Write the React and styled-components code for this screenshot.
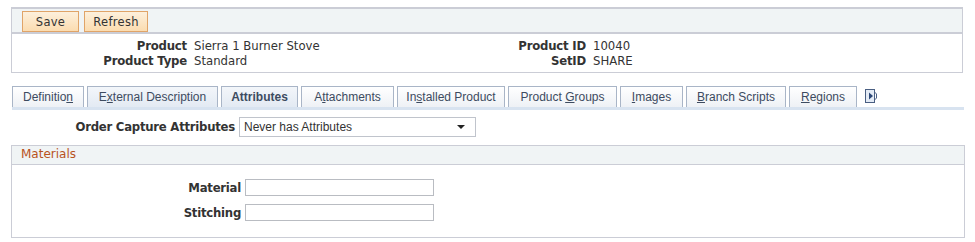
import React, { useState } from 'react';
import styled, { createGlobalStyle } from 'styled-components';

const GlobalStyle = createGlobalStyle`
  body {
    margin: 0;
    background: #ffffff;
    font-family: "DejaVu Sans", Verdana, sans-serif;
    font-size: 11.7px;
    color: #333333;
  }
`;

const Page = styled.div`
  width: 975px;
  padding: 7px 0 0 11px;
  box-sizing: border-box;
`;

const Box = styled.div`
  width: 952px;
  border: 1px solid #cbcdd6;
  border-top-width: 2px;
  box-sizing: border-box;
`;

const Toolbar = styled.div`
  display: flex;
  gap: 5px;
  height: 25px;
  padding: 2px 0 0 10px;
  box-sizing: border-box;
  background: #f0f4f5;
  border-bottom: 2px solid #cbcdd6;
`;

const Button = styled.button`
  width: ${({ w }) => w}px;
  height: 21px;
  padding: 0;
  border: 1px solid #e0a468;
  background: linear-gradient(#fdf0dc, #fbdcb0);
  font-family: "DejaVu Sans", Verdana, sans-serif;
  font-size: 11.5px;
  letter-spacing: 0.3px;
  color: #333333;
`;

const Summary = styled.div`
  display: grid;
  grid-template-columns: 182px 230px 169px auto;
  row-gap: 1px;
  padding: 5px 0 4px;
  line-height: 14px;
`;

const Label = styled.span`
  font-weight: bold;
  letter-spacing: -0.2px;
  text-align: right;
  color: #333333;
  padding-right: 7px;
  white-space: nowrap;
`;

const Value = styled.span`
  color: #333333;
  white-space: nowrap;
`;

const TabBar = styled.div`
  display: flex;
  align-items: flex-end;
  gap: 3px;
  width: 952px;
  margin-top: 10px;
  margin-left: 1px;
  border-bottom: 3px solid #d8e3f0;
  height: 24px;
`;

const Tab = styled.div`
  width: ${({ w }) => w}px;
  height: 21px;
  box-sizing: border-box;
  text-align: center;
  border: 1px solid #a9b5c7;
  border-bottom: none;
  background: ${({ shaded }) =>
    shaded ? 'linear-gradient(#f3f6fa, #e3eaf3)' : 'linear-gradient(#ffffff, #eef1f5)'};
  font-family: "Liberation Sans", Arial, sans-serif;
  font-size: 12px;
  font-weight: ${({ active }) => (active ? 'bold' : 'normal')};
  line-height: 20px;
  color: #3d4b60;
  white-space: nowrap;
  u {
    text-decoration: underline;
  }
`;

const ArrowBtn = styled.div`
  margin: 0 0 4px 5px;
  width: 12px;
  height: 14px;
  display: flex;
`;

const FieldRow = styled.div`
  display: flex;
  align-items: center;
  margin-top: 7px;
`;

const FieldLabel = styled.span`
  width: ${({ w }) => w}px;
  text-align: right;
  font-weight: bold;
  letter-spacing: -0.25px;
  padding-right: 4px;
  box-sizing: border-box;
  white-space: nowrap;
`;

const SelectBox = styled.div`
  width: 237px;
  height: 20px;
  box-sizing: border-box;
  border: 1px solid #c0c4cc;
  display: flex;
  align-items: center;
  justify-content: space-between;
  padding: 0 10px 0 4px;
  font-family: "Liberation Sans", Arial, sans-serif;
  font-size: 12px;
  color: #333333;
`;

const Caret = styled.span`
  width: 0;
  height: 0;
  border-left: 4px solid transparent;
  border-right: 4px solid transparent;
  border-top: 4px solid #222;
`;

const Group = styled.div`
  width: 954px;
  margin-top: 8px;
  border: 1px solid #cbcdd6;
  box-sizing: border-box;
  padding-bottom: 16px;
`;

const GroupHeader = styled.div`
  height: 18px;
  background: #f0f4f5;
  border-bottom: 1px solid #cbcdd6;
  padding-left: 9px;
  font-size: 12px;
  line-height: 17px;
  color: #b8531e;
`;

const InputRow = styled.div`
  display: flex;
  align-items: center;
  margin-top: ${({ top }) => top}px;
`;

const TextInput = styled.input`
  width: 189px;
  height: 17px;
  box-sizing: border-box;
  border: 1px solid #b9bcc2;
  padding: 0 3px;
  margin: 0;
  font-size: 11px;
`;

const Arrow = () => (
  <svg width="12" height="14" viewBox="0 0 12 14">
    <rect x="0.5" y="0.5" width="9" height="13" fill="#e4ebf5" stroke="#4a5f82" />
    <path d="M9.5 3 L11.5 5 L11.5 9 L9.5 11" fill="none" stroke="#4a5f82" />
    <path d="M4 3.5 L8 7 L4 10.5 Z" fill="#2c4878" />
  </svg>
);

const tabs = [
  { key: 'def', w: 72, node: <>Definitio<u>n</u></> },
  { key: 'ext', w: 131, node: <>E<u>x</u>ternal Description</>, shaded: true },
  { key: 'att', w: 77, node: <>Attributes</>, active: true, shaded: true },
  { key: 'atch', w: 93, node: <>A<u>t</u>tachments</> },
  { key: 'inst', w: 108, node: <>In<u>s</u>talled Product</> },
  { key: 'grp', w: 109, node: <>Product <u>G</u>roups</> },
  { key: 'img', w: 63, node: <><u>I</u>mages</> },
  { key: 'br', w: 100, node: <><u>B</u>ranch Scripts</> },
  { key: 'reg', w: 68, node: <><u>R</u>egions</> },
];

export default function App() {
  const [material, setMaterial] = useState('');
  const [stitching, setStitching] = useState('');

  return (
    <>
      <GlobalStyle />
      <Page>
        <Box>
          <Toolbar>
            <Button w={57}>Save</Button>
            <Button w={64}>Refresh</Button>
          </Toolbar>
          <Summary>
            <Label>Product</Label>
            <Value>Sierra 1 Burner Stove</Value>
            <Label>Product ID</Label>
            <Value>10040</Value>
            <Label>Product Type</Label>
            <Value>Standard</Value>
            <Label>SetID</Label>
            <Value>SHARE</Value>
          </Summary>
        </Box>
        <TabBar>
          {tabs.map((t) => (
            <Tab key={t.key} w={t.w} active={t.active} shaded={t.shaded}>
              {t.node}
            </Tab>
          ))}
          <ArrowBtn>
            <Arrow />
          </ArrowBtn>
        </TabBar>
        <FieldRow>
          <FieldLabel w={228}>Order Capture Attributes</FieldLabel>
          <SelectBox>
            Never has Attributes
            <Caret />
          </SelectBox>
        </FieldRow>
        <Group>
          <GroupHeader>Materials</GroupHeader>
          <InputRow top={14}>
            <FieldLabel w={233}>Material</FieldLabel>
            <TextInput value={material} onChange={(e) => setMaterial(e.target.value)} />
          </InputRow>
          <InputRow top={8}>
            <FieldLabel w={233}>Stitching</FieldLabel>
            <TextInput value={stitching} onChange={(e) => setStitching(e.target.value)} />
          </InputRow>
        </Group>
      </Page>
    </>
  );
}
